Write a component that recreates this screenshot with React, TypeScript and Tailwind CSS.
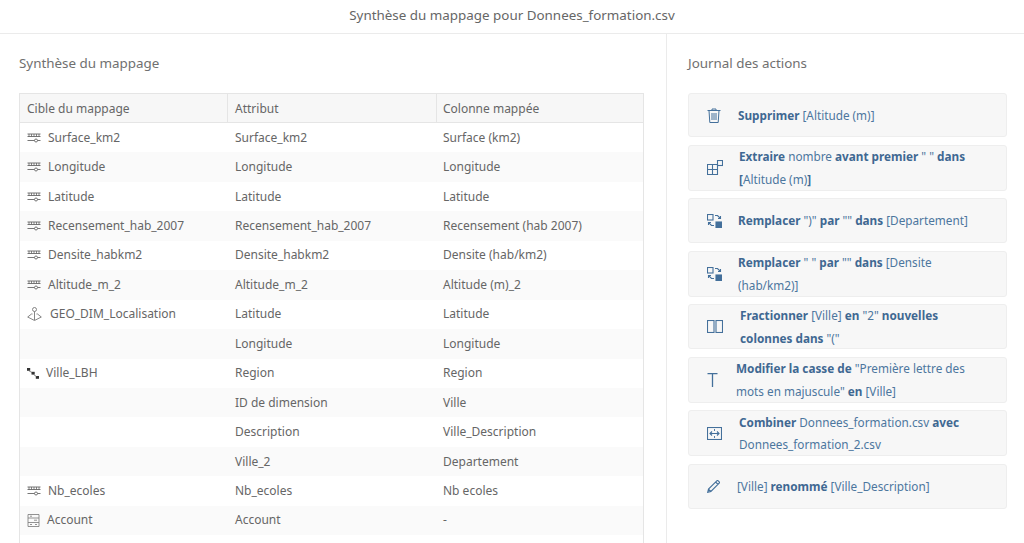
import React from "react"

const font = { fontFamily: '"Noto Sans", sans-serif' }

function MeasureIcon() {
  return (
    <svg width="14" height="10" viewBox="0 0 14 10" fill="none" stroke="#666" strokeWidth="0.9">
      <path d="M0.5 1h13M0.5 3.5h13" />
      <path d="M2 1v2.5M4.5 1v2.5M7 1v2.5M9.5 1v2.5M12 1v2.5" strokeWidth="0.8" />
      <path d="M0.5 7.5h13" />
      <circle cx="9" cy="7.5" r="1.5" fill="#fff" />
    </svg>
  )
}

function GeoIcon() {
  return (
    <svg width="16" height="14" viewBox="0 0 16 14" fill="none" stroke="#777" strokeWidth="0.9">
      <circle cx="7.5" cy="2.5" r="2" />
      <path d="M7.5 4.5v8.5M5.5 7H4.5L.7 10l6.8 3.5 6.8-3.5L10.5 7H9.5" />
    </svg>
  )
}

function HierarchyIcon() {
  return (
    <svg width="12" height="11" viewBox="0 0 12 11" fill="#333">
      <rect x="0" y="0" width="3.2" height="2.8" />
      <rect x="4.5" y="3.8" width="3.2" height="2.8" />
      <rect x="8.8" y="8" width="3.2" height="2.8" />
      <path d="M1.4 2.5 5 4.5M6.5 6.5 9.5 8.5" fill="none" stroke="#666" strokeWidth="0.8" />
    </svg>
  )
}

function AccountIcon() {
  return (
    <svg width="13" height="13" viewBox="0 0 13 13" fill="none" stroke="#777" strokeWidth="0.8">
      <path d="M1 .5h11M1 12.5h11M1 .5v12M12 .5v12M1 4h11M1 8.5h11" />
      <path d="M3 2.2h2M7 6.2h3M3 10.5h2M8 10.5h2" />
    </svg>
  )
}

const blue = "#44709b"

function Trash() {
  return (
    <svg width="14" height="15" viewBox="0 0 14 15" fill="none" stroke={blue} strokeWidth="1">
      <path d="M.5 2.5h13M5 2.5V1h4v1.5M2 2.5l.8 12h8.4l.8-12M5 5v7M7 5v7M9 5v7" />
    </svg>
  )
}

function Extract() {
  return (
    <svg width="16" height="15" viewBox="0 0 16 15" fill="none" stroke={blue} strokeWidth="1.1">
      <path d="M.5 4.5h10v10H.5zM.5 9.5h10M5.5 4.5v10" />
      <rect x="10.5" y=".5" width="5" height="5" />
    </svg>
  )
}

function Replace() {
  return (
    <svg width="15" height="14" viewBox="0 0 15 14" fill="none" stroke={blue} strokeWidth="1.1">
      <rect x=".5" y=".5" width="5.5" height="5.5" />
      <rect x="9" y="8" width="5.5" height="5.5" fill={blue} />
      <path d="M8 1.5h2.5L13.5 4.5M13.5 2v2.5H11M7 11.5H4.5L1.5 8.5M1.5 11V8.5H4" />
    </svg>
  )
}

function Columns() {
  return (
    <svg width="16" height="13" viewBox="0 0 16 13" fill="none" stroke={blue} strokeWidth="1.1">
      <rect x=".5" y=".5" width="6.5" height="12" />
      <rect x="9" y=".5" width="6.5" height="12" />
    </svg>
  )
}

function TextCase() {
  return (
    <svg width="11" height="14" viewBox="0 0 11 14" fill="none" stroke={blue} strokeWidth="1.3">
      <path d="M.5.7h10M5.5.7V14" />
    </svg>
  )
}

function Merge() {
  return (
    <svg width="15" height="13" viewBox="0 0 15 13" fill="none" stroke={blue} strokeWidth="1.1">
      <rect x=".5" y=".5" width="14" height="12" />
      <path d="M7.5 2v2M7.5 9v2" strokeWidth="0.9" />
      <path d="M3 6.5h9M5 4.5l-2 2 2 2M10 4.5l2 2-2 2" />
    </svg>
  )
}

function Pencil() {
  return (
    <svg width="13" height="13" viewBox="0 0 13 13" fill="none" stroke={blue} strokeWidth="1.1">
      <path d="M.7 12.3l.8-3.2L9.8.8a1 1 0 0 1 1.4 0l1 1a1 1 0 0 1 0 1.4L3.9 11.5zM1.5 9.1l2.4 2.4M8.6 2l2.4 2.4" />
    </svg>
  )
}

type Row = { icon?: React.ReactNode; cible?: string; attribut: string; colonne: string }

const rows: Row[] = [
  { icon: <MeasureIcon />, cible: "Surface_km2", attribut: "Surface_km2", colonne: "Surface (km2)" },
  { icon: <MeasureIcon />, cible: "Longitude", attribut: "Longitude", colonne: "Longitude" },
  { icon: <MeasureIcon />, cible: "Latitude", attribut: "Latitude", colonne: "Latitude" },
  { icon: <MeasureIcon />, cible: "Recensement_hab_2007", attribut: "Recensement_hab_2007", colonne: "Recensement (hab 2007)" },
  { icon: <MeasureIcon />, cible: "Densite_habkm2", attribut: "Densite_habkm2", colonne: "Densite (hab/km2)" },
  { icon: <MeasureIcon />, cible: "Altitude_m_2", attribut: "Altitude_m_2", colonne: "Altitude (m)_2" },
  { icon: <GeoIcon />, cible: "GEO_DIM_Localisation", attribut: "Latitude", colonne: "Latitude" },
  { attribut: "Longitude", colonne: "Longitude" },
  { icon: <HierarchyIcon />, cible: "Ville_LBH", attribut: "Region", colonne: "Region" },
  { attribut: "ID de dimension", colonne: "Ville" },
  { attribut: "Description", colonne: "Ville_Description" },
  { attribut: "Ville_2", colonne: "Departement" },
  { icon: <MeasureIcon />, cible: "Nb_ecoles", attribut: "Nb_ecoles", colonne: "Nb ecoles" },
  { icon: <AccountIcon />, cible: "Account", attribut: "Account", colonne: "-" },
]

type Action = { icon: React.ReactNode; h: string; iconCls: string; pl: string; body: React.ReactNode }

const actions: Action[] = [
  {
    icon: <Trash />, h: "h-[44px]", iconCls: "w-[14px] ml-[18px]", pl: "ml-[17px]",
    body: <><b>Supprimer</b> [Altitude (m)]</>,
  },
  {
    icon: <Extract />, h: "h-[46px]", iconCls: "w-[16px] ml-[18px]", pl: "ml-[16px]",
    body: <><b>Extraire</b> nombre <b>avant premier</b> " " <b>dans</b> <b>[</b>Altitude (m)<b>]</b></>,
  },
  {
    icon: <Replace />, h: "h-[45px]", iconCls: "w-[15px] ml-[18px]", pl: "ml-[16px]",
    body: <><b>Remplacer</b> ")" <b>par</b> "" <b>dans</b> [Departement]</>,
  },
  {
    icon: <Replace />, h: "h-[46px]", iconCls: "w-[15px] ml-[18px]", pl: "ml-[16px]",
    body: <><b>Remplacer</b> " " <b>par</b> "" <b>dans</b> [Densite (hab/km2)]</>,
  },
  {
    icon: <Columns />, h: "h-[45px]", iconCls: "w-[16px] ml-[18px]", pl: "ml-[17px]",
    body: <><b>Fractionner</b> [Ville] <b>en</b> "2" <b>nouvelles colonnes dans</b> "("</>,
  },
  {
    icon: <TextCase />, h: "h-[46px]", iconCls: "w-[11px] ml-[18px]", pl: "ml-[18px]",
    body: <><b>Modifier la casse de</b> "Première lettre des mots en majuscule" <b>en</b> [Ville]</>,
  },
  {
    icon: <Merge />, h: "h-[46px]", iconCls: "w-[15px] ml-[18px]", pl: "ml-[17px]",
    body: <><b>Combiner</b> Donnees_formation.csv <b>avec</b> Donnees_formation_2.csv</>,
  },
  {
    icon: <Pencil />, h: "h-[45px]", iconCls: "w-[13px] ml-[18px]", pl: "ml-[17px]",
    body: <>[Ville] <b>renommé</b> [Ville_Description]</>,
  },
]

export default function App() {
  return (
    <div className="h-[543px] w-[1024px] overflow-hidden bg-white text-[#666]" style={font}>
      <div className="h-[34px] border-b border-[#ebebeb] flex items-center justify-center pb-[2px] text-[13.4px] text-[#666]">
        Synthèse du mappage pour Donnees_formation.csv
      </div>
      <div className="flex h-[509px]">
        <div className="w-[667px] shrink-0 border-r border-[#ebebeb] pl-[19px] pr-[22px] overflow-hidden">
          <div className="text-[13.4px] leading-[18px] pt-[20px] text-[#707070]">Synthèse du mappage</div>
          <div className="mt-[21px] border-l border-r border-t border-[#e5e5e5] h-[460px]">
            <div className="grid grid-cols-[208px_209px_1fr] h-[29px] bg-[#f7f7f7] border-b border-[#e5e5e5] text-[12px] text-[#666]">
              <div className="flex items-center pl-[7px] pt-[1px] border-r border-[#e5e5e5]">Cible du mappage</div>
              <div className="flex items-center pl-[7px] pt-[1px] border-r border-[#e5e5e5]">Attribut</div>
              <div className="flex items-center pl-[6px] pt-[1px]">Colonne mappée</div>
            </div>
            {rows.map((r, i) => (
              <div
                key={i}
                className={`grid grid-cols-[208px_209px_1fr] h-[29.45px] text-[12px] text-[#666] ${i % 2 === 1 ? "bg-[#fafafa]" : "bg-white"}`}
              >
                <div className="flex items-center pl-[7px] gap-[7px]">
                  {r.icon}
                  <span>{r.cible}</span>
                </div>
                <div className="flex items-center pl-[7px]">{r.attribut}</div>
                <div className="flex items-center pl-[6px]">{r.colonne}</div>
              </div>
            ))}
          </div>
        </div>
        <div className="flex-1 pl-[21px] pr-[17px]">
          <div className="text-[13.4px] leading-[18px] pt-[20px] text-[#707070]">Journal des actions</div>
          <div className="mt-[21px] flex flex-col gap-[7.5px]">
            {actions.map((a, i) => (
              <div key={i} className={`flex items-center ${a.h} bg-[#f7f7f7] border border-[#eeeeee] rounded-[3px]`}>
                <div className={`flex justify-center shrink-0 ${a.iconCls}`}>{a.icon}</div>
                <div className={`${a.pl} w-[240px] text-[11.75px] leading-[22.5px] text-[#4c769e] [&_b]:font-bold [&_b]:text-[#3f6892]`}>{a.body}</div>
              </div>
            ))}
          </div>
        </div>
      </div>
    </div>
  )
}
